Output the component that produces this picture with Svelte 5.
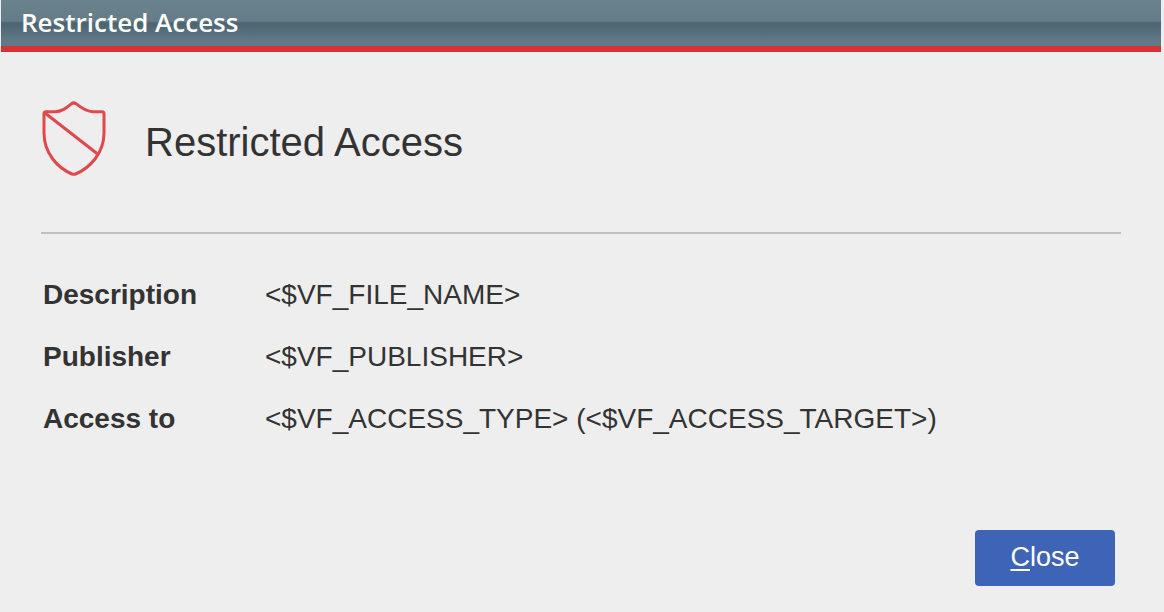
<script>
  const rows = [
    ['Description', '<$VF_FILE_NAME>'],
    ['Publisher', '<$VF_PUBLISHER>'],
    ['Access to', '<$VF_ACCESS_TYPE> (<$VF_ACCESS_TARGET>)']
  ];
</script>

<main class="window">
  <header>Restricted Access</header>
  <div class="content">
    <section class="heading">
      <svg width="66" height="78" viewBox="0 0 66 78" fill="none" stroke="#df484d" stroke-width="3" stroke-linejoin="round" aria-hidden="true">
        <path d="M30.500 3.700Q32.700 2 35 3.700C40 7.800 45 11.700 52 11.700H61Q63 11.700 63 13.800V33C63 53 49 68 34.500 74Q32.700 74.700 31 74C16.500 68 3 53 3 33V13.800Q3 11.700 5 11.700H14C21 11.700 25.500 7.800 30.500 3.700Z" />
        <path d="M4 13L56 53.500" />
      </svg>
      <h1>Restricted Access</h1>
    </section>
    <dl>
      {#each rows as [label, value]}
        <div class="row"><dt>{label}</dt><dd>{value}</dd></div>
      {/each}
    </dl>
    <footer><button type="button" accesskey="c"><u>C</u>lose</button></footer>
  </div>
</main>

<style>
  :global(body) { background: #eee; }
  .window { margin: 0 3px 0 1px; color: #333; font-family: "Liberation Sans", Arial, sans-serif; }
  header { height: 46px; padding-left: 20px; border-bottom: 6px solid #d93236; background: linear-gradient(#6b828f 0, #647c88 46%, #4c6370 50%, #627987 90%); color: #fff; font: 600 26px/44px "Open Sans", sans-serif; }
  .content { padding: 48px 40px 26px; }
  .heading { display: flex; align-items: center; gap: 38px; padding-bottom: 54px; border-bottom: 2px solid #c0c0c0; }
  h1 { margin: 0; padding-top: 6px; font-size: 40px; line-height: 48px; font-weight: 400; }
  dl { display: grid; gap: 30px; margin: 45px 0 0; padding: 0 2px; font-size: 28px; line-height: 32px; }
  .row { display: grid; grid-template-columns: 222px 1fr; }
  dt { font-weight: 700; }
  dd { margin: 0; }
  footer { display: flex; justify-content: flex-end; margin-top: 95px; padding-right: 6px; }
  button { width: 140px; height: 56px; padding: 0 0 2px; border: 0; border-radius: 4px; background: #3e64b7; color: #fff; font: 27px/32px "Liberation Sans", Arial, sans-serif; }
  u { text-decoration-thickness: 2px; text-underline-offset: 3px; }
</style>
